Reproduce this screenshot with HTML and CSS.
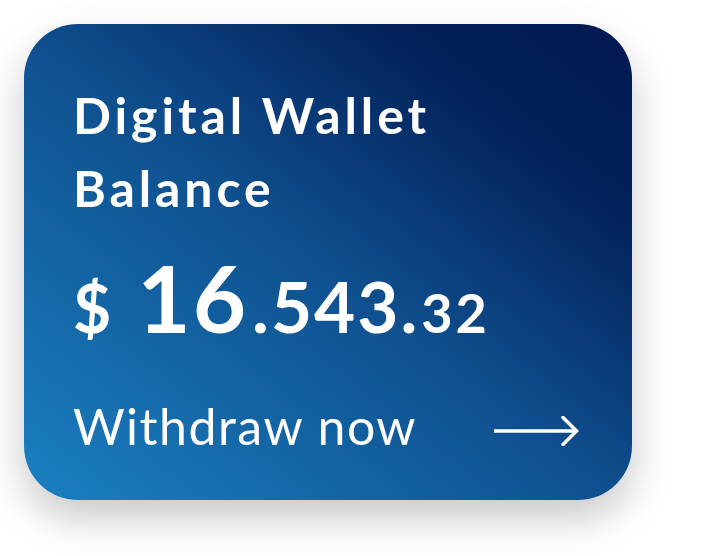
FILE: index.html
```html
<!DOCTYPE html>
<html lang="en">
<head>
<meta charset="utf-8">
<title>Digital Wallet Balance</title>
<link rel="stylesheet" href="styles.css">
</head>
<body>
  <div class="card">
    <h1 class="title">Digital Wallet<br>Balance</h1>
    <div class="amount"><span class="cur">$</span><span class="big">16</span><span class="mid">.543.</span><span class="small">32</span></div>
    <div class="action">
      <span class="action-label">Withdraw now</span>
      <svg class="arrow" width="86" height="30" viewBox="0 0 86 30" aria-hidden="true">
        <path d="M0 15 H82" stroke="#fff" stroke-width="3.5" fill="none"/>
        <path d="M69 1.5 L82.5 15 L69 28.5" stroke="#fff" stroke-width="3.5" fill="none" stroke-linecap="round" stroke-linejoin="miter"/>
      </svg>
    </div>
  </div>
</body>
</html>
```
FILE: styles.css
```css
html, body {
  margin: 0;
  padding: 0;
  background: #ffffff;
}
body {
  width: 720px;
  height: 556px;
  padding: 24px;
  box-sizing: border-box;
  font-family: Lato, "Open Sans", sans-serif;
  color: #ffffff;
}
.card {
  width: 608px;
  height: 476px;
  box-sizing: border-box;
  border-radius: 54px;
  padding: 55px 52px 0 49px;
  background: linear-gradient(to top right, #1a80c1 0%, #0f5190 48%, #03215a 80%, #011a50 100%);
  box-shadow: 0 18px 40px rgba(0, 0, 0, 0.22);
}
.title {
  margin: 0;
  font-size: 50px;
  line-height: 73px;
  font-weight: 700;
  letter-spacing: 3.9px;
}
.amount {
  margin-top: 27px;
  font-size: 92px;
  line-height: 1;
  font-weight: 700;
  white-space: nowrap;
}
.cur {
  font-size: 66px;
  line-height: 1;
  margin-right: 26px;
}
.big {
  font-size: 92px;
  line-height: 1;
  letter-spacing: 2px;
  margin-right: 4px;
}
.mid {
  font-size: 71px;
  line-height: 1;
  letter-spacing: 2px;
}
.small {
  font-size: 54px;
  line-height: 1;
  letter-spacing: 3px;
  margin-left: 2px;
}
.action {
  margin-top: 57px;
  display: flex;
  justify-content: space-between;
  align-items: flex-start;
}
.action-label {
  font-size: 50px;
  line-height: 1;
  font-weight: 400;
  letter-spacing: 1.5px;
}
.arrow {
  display: block;
  margin-top: 15px;
}
```
